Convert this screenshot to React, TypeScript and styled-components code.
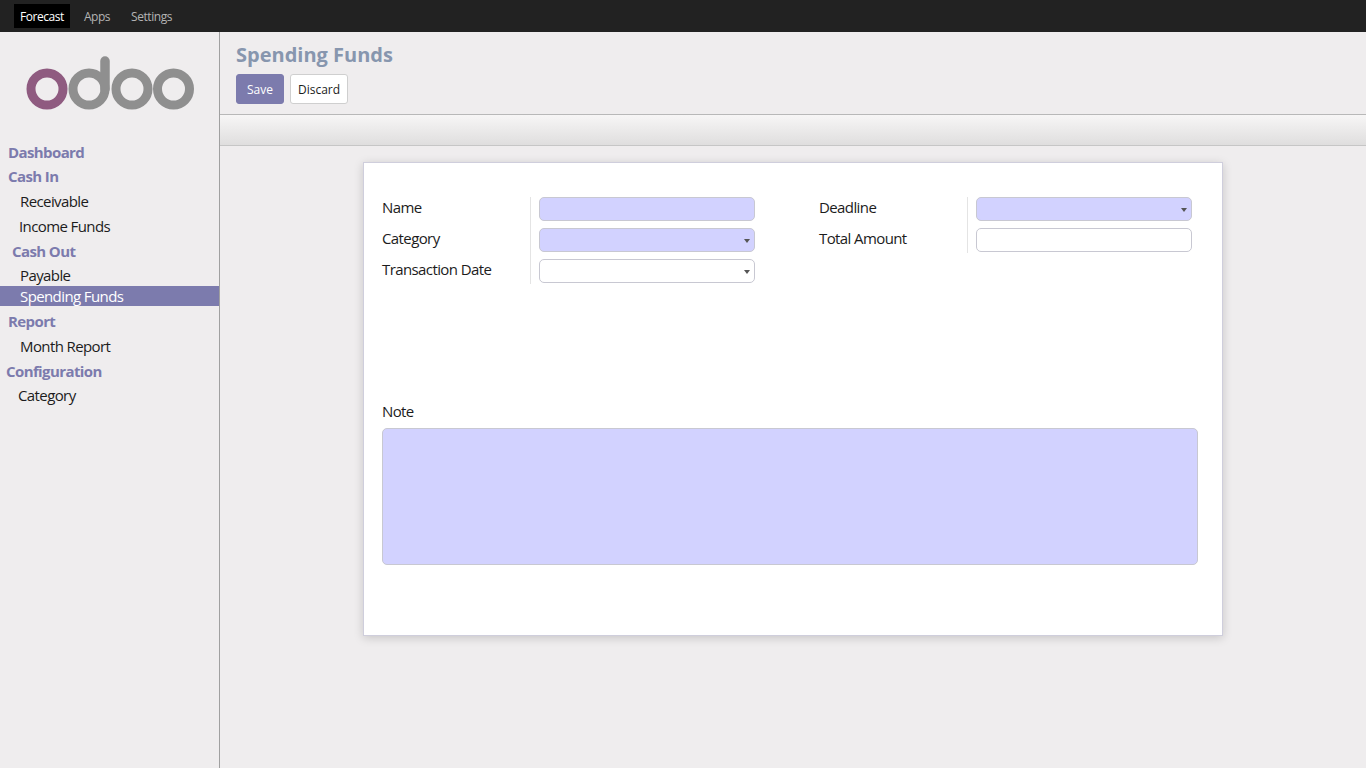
import React from 'react';
import styled, { createGlobalStyle } from 'styled-components';

const GlobalStyle = createGlobalStyle`
  html, body {
    margin: 0;
    padding: 0;
    height: 100%;
    background: #efedee;
    font-family: "Open Sans", "Noto Sans", sans-serif;
    color: #1c1c1c;
  }
  * {
    box-sizing: border-box;
  }
`;

interface NavEntry {
  label: string;
  indent: number;
  gap: number;
  kind: 'heading' | 'item' | 'active';
}

const navEntries: NavEntry[] = [
  { label: 'Dashboard', indent: 8, gap: 0, kind: 'heading' },
  { label: 'Cash In', indent: 8, gap: 4, kind: 'heading' },
  { label: 'Receivable', indent: 20, gap: 5, kind: 'item' },
  { label: 'Income Funds', indent: 19, gap: 5, kind: 'item' },
  { label: 'Cash Out', indent: 12, gap: 5, kind: 'heading' },
  { label: 'Payable', indent: 20, gap: 4, kind: 'item' },
  { label: 'Spending Funds', indent: 20, gap: 1, kind: 'active' },
  { label: 'Report', indent: 8, gap: 5, kind: 'heading' },
  { label: 'Month Report', indent: 20, gap: 5, kind: 'item' },
  { label: 'Configuration', indent: 6, gap: 5, kind: 'heading' },
  { label: 'Category', indent: 18, gap: 4, kind: 'item' },
];

const OdooLogo = () => (
  <svg width="170" height="56" viewBox="0 0 170 56" aria-label="odoo">
    <circle cx="22" cy="35" r="16" fill="none" stroke="#8f5b80" strokeWidth="9" />
    <circle cx="64" cy="35" r="16" fill="none" stroke="#8f8f8f" strokeWidth="9" />
    <path d="M80 35V7" fill="none" stroke="#8f8f8f" strokeWidth="9.5" strokeLinecap="round" />
    <circle cx="107" cy="35" r="16" fill="none" stroke="#8f8f8f" strokeWidth="9" />
    <circle cx="148.5" cy="35" r="16" fill="none" stroke="#8f8f8f" strokeWidth="9" />
  </svg>
);

const App: React.FC = () => {
  return (
    <Page>
      <GlobalStyle />
      <TopBar>
        <TopLink $active>Forecast</TopLink>
        <TopLink>Apps</TopLink>
        <TopLink>Settings</TopLink>
      </TopBar>
      <Body>
        <Sidebar>
          <LogoBox>
            <OdooLogo />
          </LogoBox>
          <Nav>
            {navEntries.map((entry) => (
              <NavRow key={entry.label} $indent={entry.indent} $gap={entry.gap} $kind={entry.kind}>
                {entry.label}
              </NavRow>
            ))}
          </Nav>
        </Sidebar>
        <Main>
          <Header>
            <Title>Spending Funds</Title>
            <ButtonRow>
              <SaveButton>Save</SaveButton>
              <DiscardButton>Discard</DiscardButton>
            </ButtonRow>
          </Header>
          <SubBar />
          <Content>
            <Sheet>
              <FormGrid>
                <FieldGroup>
                  <Labels>
                    <Label>Name</Label>
                    <Label>Category</Label>
                    <Label>Transaction Date</Label>
                  </Labels>
                  <Inputs>
                    <Field $required />
                    <Field $required><CaretMark /></Field>
                    <Field><CaretMark /></Field>
                  </Inputs>
                </FieldGroup>
                <FieldGroup>
                  <Labels>
                    <Label>Deadline</Label>
                    <Label>Total Amount</Label>
                  </Labels>
                  <Inputs>
                    <Field $required><CaretMark /></Field>
                    <Field />
                  </Inputs>
                </FieldGroup>
              </FormGrid>
              <NoteLabel>Note</NoteLabel>
              <NoteArea />
            </Sheet>
          </Content>
        </Main>
      </Body>
    </Page>
  );
};

export default App;

// Styled Components

const Page = styled.div`
  width: 1366px;
  height: 768px;
  display: flex;
  flex-direction: column;
  overflow: hidden;
`;

const TopBar = styled.div`
  height: 32px;
  flex: none;
  display: flex;
  align-items: center;
  gap: 1px;
  padding-left: 14px;
  background: #222222;
`;

const TopLink = styled.a<{ $active?: boolean }>`
  height: 24px;
  padding: 0 6px;
  margin-right: ${({ $active }) => ($active ? '7px' : '8px')};
  display: flex;
  align-items: center;
  font-size: 12px;
  letter-spacing: -0.45px;
  color: ${({ $active }) => ($active ? '#ffffff' : '#b4b4b4')};
  background: ${({ $active }) => ($active ? '#000000' : 'transparent')};
`;

const Body = styled.div`
  flex: 1;
  display: flex;
  min-height: 0;
`;

const Sidebar = styled.div`
  width: 220px;
  flex: none;
  border-right: 1px solid #a0a0a0;
`;

const LogoBox = styled.div`
  height: 110px;
  padding: 22px 0 0 25px;
`;

const Nav = styled.nav`
  display: flex;
  flex-direction: column;
`;

const NavRow = styled.a<{ $indent: number; $gap: number; $kind: 'heading' | 'item' | 'active' }>`
  height: 20px;
  margin-top: ${({ $gap }) => $gap}px;
  padding-left: ${({ $indent }) => $indent}px;
  padding-bottom: 1px;
  display: flex;
  align-items: center;
  font-size: 15px;
  font-weight: ${({ $kind }) => ($kind === 'heading' ? 700 : 400)};
  letter-spacing: -0.6px;
  color: ${({ $kind }) =>
    $kind === 'heading' ? '#7c7bad' : $kind === 'active' ? '#ffffff' : '#1c1c1c'};
  background: ${({ $kind }) => ($kind === 'active' ? '#7c7bad' : 'transparent')};
`;

const Main = styled.div`
  flex: 1;
  min-width: 0;
  display: flex;
  flex-direction: column;
`;

const Header = styled.div`
  height: 83px;
  flex: none;
  padding: 10px 16px 0;
  border-bottom: 1px solid #b8b8b8;
`;

const Title = styled.h2`
  margin: 0;
  height: 32px;
  line-height: 26px;
  font-size: 20px;
  font-weight: 700;
  color: #8796ae;
`;

const ButtonRow = styled.div`
  display: flex;
  gap: 6px;
`;

const SaveButton = styled.button`
  width: 48px;
  height: 30px;
  padding: 0;
  font-family: inherit;
  font-size: 12px;
  color: #ffffff;
  background: #7c7bad;
  border: 1px solid #7c7bad;
  border-radius: 3px;
`;

const DiscardButton = styled.button`
  width: 58px;
  height: 30px;
  padding: 0;
  font-family: inherit;
  font-size: 12px;
  color: #1c1c1c;
  background: #ffffff;
  border: 1px solid #cfcfcf;
  border-radius: 3px;
`;

const SubBar = styled.div`
  height: 31px;
  flex: none;
  background: linear-gradient(to bottom, #f7f6f6, #dfdede);
  border-bottom: 1px solid #c6c6c6;
`;

const Content = styled.div`
  flex: 1;
  padding: 16px 0 0 143px;
`;

const Sheet = styled.div`
  width: 860px;
  height: 474px;
  padding: 34px 18px 0;
  background: #ffffff;
  border: 1px solid #cfcedc;
  box-shadow: 0 2px 9px rgba(0, 0, 0, 0.17);
`;

const FormGrid = styled.div`
  display: grid;
  grid-template-columns: 437px 373px;
  height: 87px;
`;

const FieldGroup = styled.div`
  display: flex;
  align-items: flex-start;
`;

const Labels = styled.div`
  width: 148px;
  flex: none;
  display: flex;
  flex-direction: column;
  gap: 7px;
`;

const Label = styled.div`
  height: 24px;
  line-height: 20px;
  font-size: 15px;
  letter-spacing: -0.6px;
  color: #1c1c1c;
`;

const Inputs = styled.div`
  width: 225px;
  flex: none;
  padding: 0 0 1px 8px;
  display: flex;
  flex-direction: column;
  gap: 7px;
  border-left: 1px solid #e4e4e4;
`;

const Field = styled.div<{ $required?: boolean }>`
  position: relative;
  width: 216px;
  height: 24px;
  background: ${({ $required }) => ($required ? '#d2d2ff' : '#ffffff')};
  border: 1px solid #c8c8d2;
  border-radius: 5px;
`;

const CaretMark = styled.span`
  position: absolute;
  right: 4px;
  top: 10px;
  width: 0;
  height: 0;
  border-left: 3px solid transparent;
  border-right: 3px solid transparent;
  border-top: 4px solid #555555;
`;

const NoteLabel = styled.div`
  margin-top: 117px;
  height: 20px;
  line-height: 20px;
  font-size: 15px;
  letter-spacing: -0.6px;
  color: #1c1c1c;
`;

const NoteArea = styled.div`
  width: 816px;
  height: 137px;
  margin-top: 7px;
  background: #d2d2ff;
  border: 1px solid #c8c8d2;
  border-radius: 5px;
`;
